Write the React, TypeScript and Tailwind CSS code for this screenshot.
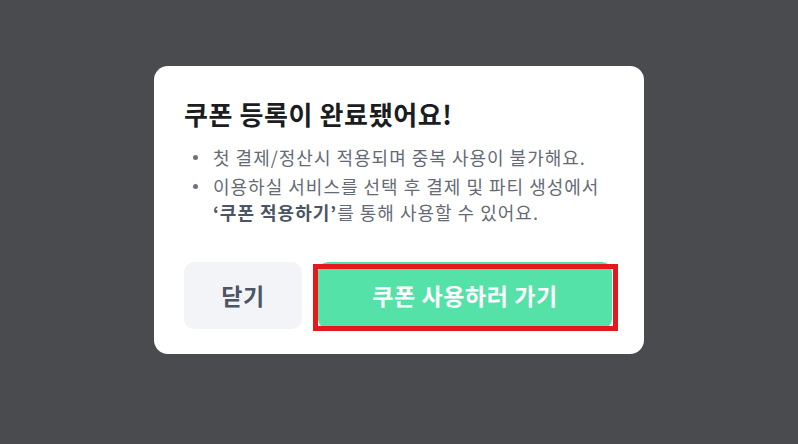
function Dot() {
  return (
    <span className="w-[29px] shrink-0 pl-[9px] h-[26px] flex items-center">
      <span className="w-[5px] h-[5px] rounded-full bg-[#6b7280]" />
    </span>
  );
}

export default function App() {
  return (
    <div
      className="w-[798px] h-[444px] bg-[#4a4b4e] flex items-start justify-center pt-[66px]"
      style={{ fontFamily: '"Noto Sans CJK KR", "Noto Sans", sans-serif' }}
    >
      <div className="w-[490px] bg-white rounded-[14px] pl-[30px] pr-[32px] pt-[30px] pb-[25px]">
        <h2 className="text-[26px] leading-[36px] font-bold text-[#1b1d1f] tracking-[0.6px]">
          쿠폰 등록이 완료됐어요!
        </h2>
        <ul className="mt-[12px] flex flex-col gap-[3px] text-[18px] leading-[26px] text-[#656b75] tracking-[1px]">
          <li className="flex">
            <Dot />
            <span>첫 결제/정산시 적용되며 중복 사용이 불가해요.</span>
          </li>
          <li className="flex">
            <Dot />
            <span>
              이용하실 서비스를 선택 후 결제 및 파티 생성에서
              <br />
              <b className="font-bold text-[#4b5563]">‘쿠폰 적용하기’</b>를 통해 사용할 수 있어요.
            </span>
          </li>
        </ul>
        <div className="mt-[37px] flex gap-[16px]">
          <button className="w-[118px] h-[67px] rounded-[10px] bg-[#f2f4f7] text-[23px] font-bold text-[#4b5563] tracking-[0.6px]">
            닫기
          </button>
          <div className="relative flex-1">
            <button className="w-full h-[67px] rounded-[10px] bg-[#55e2a9] text-[23px] font-bold text-white tracking-[0.6px]">
              쿠폰 사용하러 가기
            </button>
            <div className="absolute left-[-5px] right-[-6px] top-[2px] bottom-[-2px] border-[5px] border-[#e3191e] pointer-events-none" />
          </div>
        </div>
      </div>
    </div>
  );
}
